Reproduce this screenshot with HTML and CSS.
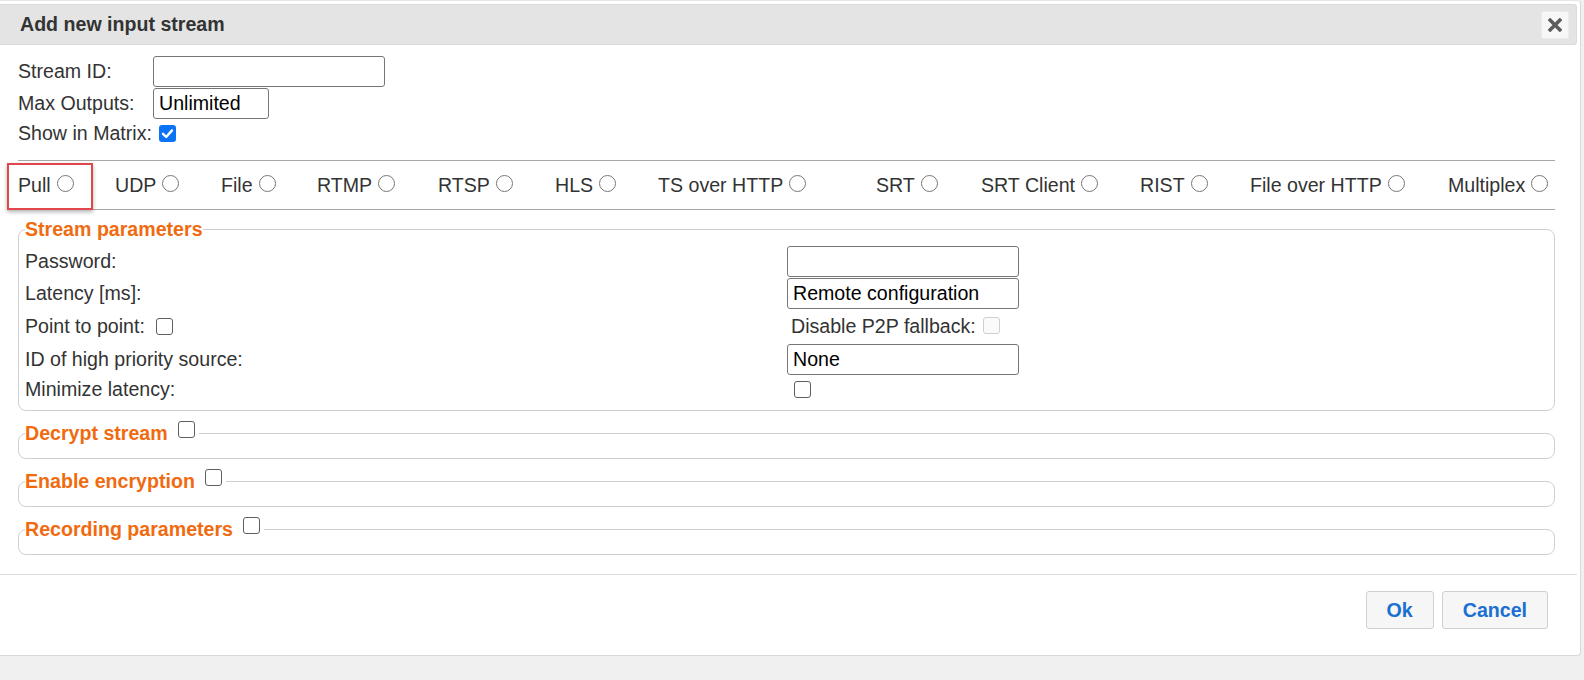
FILE: index.html
```html
<!DOCTYPE html>
<html>
<head>
<meta charset="utf-8">
<title>Add new input stream</title>
<link rel="stylesheet" href="styles.css">
</head>
<body>
<div class="dialog">
  <div class="titlebar">
    <span class="title">Add new input stream</span>
    <button class="close" type="button" aria-label="Close">
      <svg width="14" height="14" viewBox="0 0 14 14"><path d="M2.2 2.2 L11.8 11.8 M11.8 2.2 L2.2 11.8" stroke="#5c5c5c" stroke-width="3.6" stroke-linecap="square" fill="none"/></svg>
    </button>
  </div>
  <div class="content">
    <div class="topform">
      <label class="lbl">Stream ID:</label>
      <div><input class="txt w-id" type="text"></div>
      <label class="lbl">Max Outputs:</label>
      <div><input class="txt w-max" type="text" value="Unlimited"></div>
      <label class="lbl">Show in Matrix:</label>
      <div><span class="check on"><svg width="17" height="17" viewBox="0 0 17 17"><path d="M4 8.8 L7.2 12 L13 5.4" stroke="#fff" stroke-width="2.4" fill="none" stroke-linecap="round" stroke-linejoin="round"/></svg></span></div>
    </div>

    <div class="tabs">
      <div class="tab">Pull<input class="radio" type="radio" name="t"></div>
      <div class="tab">UDP<input class="radio" type="radio" name="t"></div>
      <div class="tab">File<input class="radio" type="radio" name="t"></div>
      <div class="tab">RTMP<input class="radio" type="radio" name="t"></div>
      <div class="tab">RTSP<input class="radio" type="radio" name="t"></div>
      <div class="tab">HLS<input class="radio" type="radio" name="t"></div>
      <div class="tab">TS over HTTP<input class="radio" type="radio" name="t"></div>
      <div class="tab">SRT<input class="radio" type="radio" name="t"></div>
      <div class="tab">SRT Client<input class="radio" type="radio" name="t"></div>
      <div class="tab">RIST<input class="radio" type="radio" name="t"></div>
      <div class="tab">File over HTTP<input class="radio" type="radio" name="t"></div>
      <div class="tab">Multiplex<input class="radio" type="radio" name="t"></div>
      <div class="highlight"></div>
    </div>

    <fieldset class="params">
      <legend>Stream parameters</legend>
      <div class="pgrid">
        <div class="lbl">Password:</div>
        <div><input class="txt w-id" type="password"></div>
        <div class="lbl">Latency [ms]:</div>
        <div><input class="txt w-id" type="text" value="Remote configuration"></div>
        <div class="lbl">Point to point:<input class="cb" type="checkbox"></div>
        <div class="lbl indent">Disable P2P fallback:<input class="cb" type="checkbox" disabled></div>
        <div class="lbl">ID of high priority source:</div>
        <div><input class="txt w-id" type="text" value="None"></div>
        <div class="lbl">Minimize latency:</div>
        <div class="lbl"><input class="cb first" type="checkbox"></div>
      </div>
    </fieldset>

    <fieldset class="fold">
      <legend>Decrypt stream<input class="cb" type="checkbox"></legend>
    </fieldset>
    <fieldset class="fold">
      <legend>Enable encryption<input class="cb" type="checkbox"></legend>
    </fieldset>
    <fieldset class="fold">
      <legend>Recording parameters<input class="cb" type="checkbox"></legend>
    </fieldset>
  </div>
  <div class="buttonpane">
    <button class="btn" type="button">Ok</button>
    <button class="btn" type="button">Cancel</button>
  </div>
</div>
</body>
</html>
```

FILE: styles.css
```css
* { box-sizing: border-box; }

html, body {
  margin: 0;
  padding: 0;
  height: 100%;
}

body {
  background: #f0f0f0;
  overflow: hidden;
  font-family: "Liberation Sans", Arial, sans-serif;
  font-size: 19.6px;
  color: #333;
}

.dialog {
  margin-left: -6px;
  width: 1587px;
  background: #fff;
  border: 1px solid #d8d8d8;
  border-top-color: #e6e6e6;
  border-radius: 4px;
  padding: 3px;
}

.titlebar {
  height: 41px;
  background: #e4e4e4;
  border: 1px solid #dadada;
  border-radius: 3px;
  display: flex;
  align-items: center;
  justify-content: space-between;
  padding: 0 7px 0 21px;
}

.title {
  font-weight: bold;
  color: #333;
}

.close {
  width: 28px;
  height: 28px;
  padding: 0;
  margin: 0;
  border: 1px solid #ececec;
  border-radius: 2px;
  background: #f7f7f7;
  display: flex;
  align-items: center;
  justify-content: center;
}

.content {
  padding: 11px 22px 9px 20px;
}

.lbl {
  color: #333;
  display: flex;
  align-items: center;
  white-space: nowrap;
}

.topform {
  display: grid;
  grid-template-columns: 135px auto;
  grid-template-rows: 31px 31px 26px;
  row-gap: 1px;
  align-items: center;
}

.topform > div {
  display: flex;
  align-items: center;
}

.txt {
  height: 31px;
  border: 1px solid #767676;
  border-radius: 3px;
  padding: 0 5px;
  font-family: "Liberation Sans", Arial, sans-serif;
  font-size: 19.6px;
  color: #000;
  background: #fff;
  margin: 0;
  outline: none;
}

.w-id { width: 232px; }
.w-max { width: 116px; }

.check {
  width: 17px;
  height: 17px;
  border-radius: 3px;
  display: inline-block;
  margin-left: 6px;
}

.check.on {
  background: #0b73f5;
}

.check svg { display: block; }

.cb {
  -webkit-appearance: none;
  appearance: none;
  width: 17px;
  height: 17px;
  border: 1px solid #5f5f5f;
  border-radius: 3px;
  background: #fff;
  margin: 0 0 0 11px;
  flex: none;
}

.cb:disabled {
  border-color: #cfcfcf;
  background: #fafafa;
  margin-left: 7px;
  margin-bottom: 3px;
}

.cb.first { margin-left: 7px; }

.radio {
  -webkit-appearance: none;
  appearance: none;
  width: 17px;
  height: 17px;
  border: 1px solid #777;
  border-radius: 50%;
  background: #fff;
  margin: 0 0 3px 6px;
  flex: none;
}

.tabs {
  position: relative;
  margin-top: 14px;
  height: 50px;
  border-top: 1px solid #a8a8a8;
  border-bottom: 1px solid #a8a8a8;
  display: grid;
  grid-template-columns: 97px 106px 96px 121px 117px 103px 218px 105px 159px 110px 198px 1fr;
  align-items: center;
}

.tab {
  display: flex;
  align-items: center;
  white-space: nowrap;
  color: #333;
}

.highlight {
  position: absolute;
  left: -11px;
  top: 2px;
  width: 86px;
  height: 47px;
  border: 2px solid #e0474c;
  box-shadow: 0 2px 4px rgba(0, 0, 0, 0.3);
  pointer-events: none;
}

fieldset {
  margin: 0;
  border: 1px solid #cfcfcf;
  border-radius: 8px;
  min-width: 0;
}

legend {
  color: #f06b10;
  font-weight: bold;
  padding: 0;
  line-height: 22px;
}

.params {
  margin-top: 8px;
  margin-bottom: 10px;
  padding: 6px 6px 8px 6px;
}

.pgrid {
  display: grid;
  grid-template-columns: 762px 1fr;
  grid-template-rows: 31px 31px 33px 31px 26px;
  row-gap: 1px;
  align-items: center;
}

.pgrid > div {
  display: flex;
  align-items: center;
}

.indent { padding-left: 4px; }

.fold {
  margin-bottom: 10px;
  padding: 0 6px 13px 6px;
}

.fold legend {
  display: flex;
  align-items: center;
  height: 24px;
  padding-right: 4px;
}

.fold legend .cb {
  margin: 0 0 7px 10px;
}

.buttonpane {
  border-top: 1px solid #dddddd;
  padding: 16px 29px 23px 0;
  display: flex;
  justify-content: flex-end;
  gap: 8px;
}

.btn {
  height: 38px;
  padding: 0 20px;
  margin: 0;
  border: 1px solid #d0d0d0;
  border-radius: 3px;
  background: #f6f6f6;
  font-family: "Liberation Sans", Arial, sans-serif;
  font-size: 19.6px;
  font-weight: bold;
  color: #1a6fd2;
}
```
